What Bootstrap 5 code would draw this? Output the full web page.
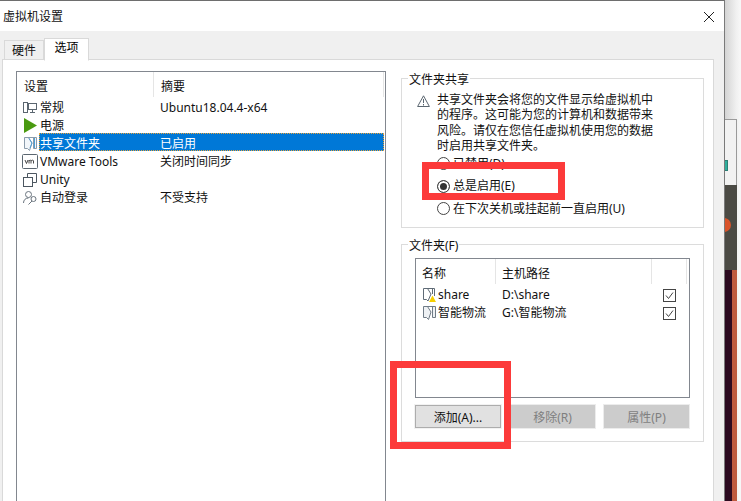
<!DOCTYPE html>
<html lang="zh-CN">
<head>
<meta charset="utf-8">
<title>虚拟机设置</title>
<link href="https://cdn.jsdelivr.net/npm/bootstrap@5.3.0/dist/css/bootstrap.min.css" rel="stylesheet">
<style>
html,body{margin:0;height:501px;overflow:hidden;background:#fff}
body{font-family:"Noto Sans","Noto Sans CJK SC",sans-serif;font-size:12px;line-height:14px;color:#111}
.stage{width:741px;height:501px}
.dialog{width:725px;height:501px;background:#f0f0f0;border-top:1px solid #6e6e6e;border-right:1px solid #7a7a7a;position:relative;flex:none}
.titlebar{height:30px;background:#fff;padding:1px 3px 0;font-size:12px}
.closer{margin-right:7px}
.tabstrip{height:28px;padding:7px 0 0 4px;border:0;flex-wrap:nowrap}
.tabstrip .nav-link{font-size:12px;line-height:14px;color:#111;border-radius:0;margin:0;background:#f0f0f0;border:1px solid #d9d9d9;padding:3px 0 1px;text-align:center;white-space:nowrap;height:20px;width:40px;margin-top:2px}
.tabstrip .nav-link.active{background:#fff;border-color:#d9d9d9 #d9d9d9 #fff;height:23px;width:45px;margin-top:0;padding:2px 0 0;position:relative}
.panel{margin-left:2px;width:712px;height:442px;background:#fff;border:1px solid #d9d9d9;border-bottom:0;padding:11px 0 0 13px}
.listbox{width:370px;height:440px;border:1px solid #82878f;border-bottom:0;flex:none}
.headrow{height:25px}
.hcell{height:25px;padding:8px 0 0 7px;border-right:1px solid #e5e5e5}
.hname{width:137px}
.hsum{width:230px}
.setrow{height:18px;position:relative}
.setico{width:18px;height:18px;flex:none;display:flex;align-items:center;justify-content:center;padding-top:3px}
.setname{width:121px;padding:4px 0 0 1px;flex:none}
.setsum{padding-top:4px}
.setrow.picked .setname,.setrow.picked .setsum{color:#fff}
.pickband{background:#0078d7;outline:1px dotted #e8a33c;outline-offset:-1px;height:18px;flex:1;display:flex;align-items:center;margin-right:1px}
.sidecol{width:303px;margin-left:15px;padding-top:7px}
.framebox{border:1px solid #dcdcdc;position:relative;padding:0}
.frameone{height:150px;padding:8px 0 0 15px}
.frametwo{height:198px;margin-top:16px;padding:13px 0 0 13px}
.framecap{position:absolute;left:6px;top:-6px;background:#fff;padding:0 1px;line-height:14px}
.warnwrap{width:21px;flex:none;padding-top:6px}
.warntext{width:220px;line-height:14.4px;padding-top:6px;margin-left:-1px}
.cjkdot{font-family:"Noto Sans CJK TC",sans-serif}
.radios{padding:0 0 0 20px;margin:-1px 0 0}
.radioline{height:22.5px;display:flex;align-items:center;margin:0;padding:0;min-height:0}
.radioline .form-check-input{width:13px;height:13px;margin:0 3px 0 0;float:none;border:1px solid #444;background-color:#fff;flex:none}
.radioline .form-check-input:checked{background-image:none;background-color:#333;border-color:#444;box-shadow:inset 0 0 0 2px #fff}
.radioline .form-check-label{line-height:14px;white-space:nowrap}
.folderbox{width:275px;height:140px;border:1px solid #82878f}
.fhead{height:27px;padding-bottom:2px}
.fcell{height:25px;padding:8px 0 0 6px;border-right:1px solid #e5e5e5}
.fname{width:80px}
.fpath{width:156px}
.fchk{width:35px}
.frow{height:18px;padding-left:7px}
.ficon{width:15px;flex:none;display:flex}
.fn{width:64px;flex:none}
.fp{width:161px;flex:none}
.tick{width:13px;height:13px;display:block}
.btnrow{margin-top:7px;width:275px;gap:9px}
.actbtn{height:23px;padding:2px 0 0;font-size:12px;line-height:14px;border-radius:0;width:86px;color:#111;background:#e1e1e1;border:1px solid #adadad;box-shadow:0 0 0 1px #f2f2f2}
.actbtn.btn:disabled{opacity:1;background:#ccc;border-color:#ccc;color:#7f7f7f;box-shadow:0 0 0 1px #ececec;width:85px}
.redmark{position:absolute;border:7px solid #fc3a3a;pointer-events:none}
.markone{left:422px;top:161px;width:143px;height:38px}
.marktwo{left:390px;top:360px;width:121px;height:88px}
.backdrop{width:16px;height:501px;background:linear-gradient(90deg,#d4d4d4 0,#f0f0f0 70%,#f8f8f8 100%)}
.shade{height:119px}
.appstrip{width:12px;flex:none}
.appwhite{height:66px;background:#f2f2f2;border-top:1px solid #9a9a9a;border-right:1px solid #9a9a9a;position:relative;overflow:hidden}
.tealchip{position:absolute;left:-4px;top:40px;width:7px;height:11px;background:#2fae9c;border:1px solid #2b7f75}
.appdark{height:85px;background:#4b4a44;position:relative;overflow:hidden}
.orangedot{position:absolute;left:-8px;top:33px;width:14px;height:14px;border-radius:50%;background:#d9532a}
.appbase{height:231px;background:linear-gradient(90deg,#2c0a20 0,#2c0a20 58%,#bd5a3f 58%,#bd5a3f 100%)}
</style>
</head>
<body>
<div class="stage d-flex">
  <div class="dialog d-flex flex-column">
    <div class="titlebar d-flex align-items-center justify-content-between">
      <span>虚拟机设置</span>
      <svg class="closer" width="10" height="10" viewBox="0 0 10 10"><path d="M0 0L10 10M10 0L0 10" stroke="#222" stroke-width="1" fill="none"/></svg>
    </div>
    <ul class="nav nav-tabs tabstrip">
      <li class="nav-item"><a class="nav-link" href="#">硬件</a></li>
      <li class="nav-item"><a class="nav-link active" href="#">选项</a></li>
    </ul>
    <div class="panel d-flex">
      <div class="listbox">
        <div class="headrow d-flex">
          <div class="hcell hname">设置</div>
          <div class="hcell hsum">摘要</div>
        </div>
        <div class="setrow d-flex align-items-center ps-1">
          <span class="setico"><svg width="14" height="11" viewBox="0 0 14 11" fill="none" stroke="#5b6670"><rect x=".5" y=".5" width="4" height="10"/><rect x="5.500" y="1.500" width="8" height="6"/><path d="M9.500 8v2M7 10.500h5"/></svg></span>
          <span class="setname">常规</span><span class="setsum">Ubuntu18.04.4-x64</span>
        </div>
        <div class="setrow d-flex align-items-center ps-1">
          <span class="setico"><svg width="13" height="15" viewBox="0 0 13 15"><path d="M0 0L13 7.500L0 15Z" fill="#4a9a10"/></svg></span>
          <span class="setname">电源</span>
        </div>
        <div class="setrow picked d-flex align-items-center ps-1">
          <span class="setico"><svg width="13" height="14" viewBox="0 0 13 14" fill="none"><path d="M.5 .5H12.500V11.500H9.500V.5M.5 .5V11.500H3.500L5.500 13.500L8 6L4.500 .5" stroke="#8a9bab" fill="#f2f6fa"/><path d="M5 1.500L8 6L6 11M10.500 1V11" stroke="#4f9fd6"/></svg></span>
          <div class="pickband"><span class="setname">共享文件夹</span><span class="setsum">已启用</span></div>
        </div>
        <div class="setrow d-flex align-items-center ps-1">
          <span class="setico"><svg width="16" height="15" viewBox="0 0 16 15"><rect x=".5" y=".5" width="15" height="14" rx="1" fill="#fff" stroke="#5b6670"/><path d="M3 6l1.500 3.500L6 6M7 9.500V6M7 7c1-1.200 2-1 2 0v2.500M9 7c1-1.200 2.500-1 2.500 0v2.500" fill="none" stroke="#333" stroke-width=".9"/></svg></span>
          <span class="setname">VMware Tools</span><span class="setsum">关闭时间同步</span>
        </div>
        <div class="setrow d-flex align-items-center ps-1">
          <span class="setico"><svg width="14" height="14" viewBox="0 0 14 14" fill="none" stroke="#4c5660"><rect x=".5" y="4.500" width="9" height="9" fill="#fff"/><path d="M4.500 4.500V.5H13.500V9.500H9.500"/></svg></span>
          <span class="setname">Unity</span>
        </div>
        <div class="setrow d-flex align-items-center ps-1">
          <span class="setico"><svg width="15" height="14" viewBox="0 0 15 14" fill="none" stroke="#6a747e"><circle cx="5.500" cy="3.500" r="3"/><path d="M.5 12c0-3 2-5 5-5"/><circle cx="10.500" cy="8" r="2.500"/><path d="M9 10L5.500 13.500"/></svg></span>
          <span class="setname">自动登录</span><span class="setsum">不受支持</span>
        </div>
      </div>
      <div class="sidecol">
        <div class="framebox frameone">
          <span class="framecap">文件夹共享</span>
          <div class="d-flex">
            <div class="warnwrap"><svg width="13" height="12" viewBox="0 0 13 12" fill="none"><path d="M6.500 .8L12.400 11.500H.6Z" stroke="#5b6670"/><path d="M6.500 4v4M6.500 9v1.500" stroke="#5b6670"/></svg></div>
            <div class="warntext">共享文件夹会将您的文件显示给虚拟机中的程序<span class="cjkdot">。</span>这可能为您的计算机和数据带来风险<span class="cjkdot">。</span>请仅在您信任虚拟机使用您的数据时启用共享文件夹<span class="cjkdot">。</span></div>
          </div>
          <div class="radios">
            <div class="form-check radioline"><input class="form-check-input" type="radio" name="sharing" id="r1"><label class="form-check-label" for="r1">已禁用(D)</label></div>
            <div class="form-check radioline"><input class="form-check-input" type="radio" name="sharing" id="r2" checked><label class="form-check-label" for="r2">总是启用(E)</label></div>
            <div class="form-check radioline"><input class="form-check-input" type="radio" name="sharing" id="r3"><label class="form-check-label" for="r3">在下次关机或挂起前一直启用(U)</label></div>
          </div>
        </div>
        <div class="framebox frametwo">
          <span class="framecap">文件夹(F)</span>
          <div class="folderbox">
            <div class="fhead d-flex">
              <div class="fcell fname">名称</div>
              <div class="fcell fpath">主机路径</div>
              <div class="fcell fchk"></div>
            </div>
            <div class="frow d-flex align-items-center">
              <span class="ficon"><svg width="13" height="14" viewBox="0 0 13 14" fill="none"><path d="M.5 .5H11.500V8M9.500 .5V6M.5 .5V11.500H3.500L5 13L8 6L4.500 .5" stroke="#5f6b76" fill="#fff"/><path d="M6 14L9.500 7.500L13 14Z" fill="#f6cf00"/></svg></span>
              <span class="fn">share</span><span class="fp">D:\share</span>
              <svg class="tick" viewBox="0 0 13 13" fill="none"><rect x=".5" y=".5" width="12" height="12" stroke="#444" fill="#fff"/><path d="M3 6.500L5.500 9.500L10 3.500" stroke="#444"/></svg>
            </div>
            <div class="frow d-flex align-items-center">
              <span class="ficon"><svg width="13" height="14" viewBox="0 0 13 14" fill="none"><path d="M.5 .5H12.500V11.500H9.500V.5M.5 .5V11.500H3.500L5.500 13.500L8 6L4.500 .5" stroke="#6f7b86" fill="#eef1f4"/></svg></span>
              <span class="fn">智能物流</span><span class="fp">G:\智能物流</span>
              <svg class="tick" viewBox="0 0 13 13" fill="none"><rect x=".5" y=".5" width="12" height="12" stroke="#444" fill="#fff"/><path d="M3 6.500L5.500 9.500L10 3.500" stroke="#444"/></svg>
            </div>
          </div>
          <div class="btnrow d-flex">
            <button type="button" class="btn actbtn">添加(A)...</button>
            <button type="button" class="btn actbtn" disabled>移除(R)</button>
            <button type="button" class="btn actbtn" disabled>属性(P)</button>
          </div>
        </div>
      </div>
    </div>
    <div class="redmark markone"></div>
    <div class="redmark marktwo"></div>
  </div>
  <div class="backdrop d-flex flex-column">
    <div class="shade"></div>
    <div class="appstrip">
      <div class="appwhite"><div class="tealchip"></div></div>
      <div class="appdark"><div class="orangedot"></div></div>
      <div class="appbase"></div>
    </div>
  </div>
</div>
<script src="https://cdn.jsdelivr.net/npm/bootstrap@5.3.0/dist/js/bootstrap.bundle.min.js"></script>
</body>
</html>
